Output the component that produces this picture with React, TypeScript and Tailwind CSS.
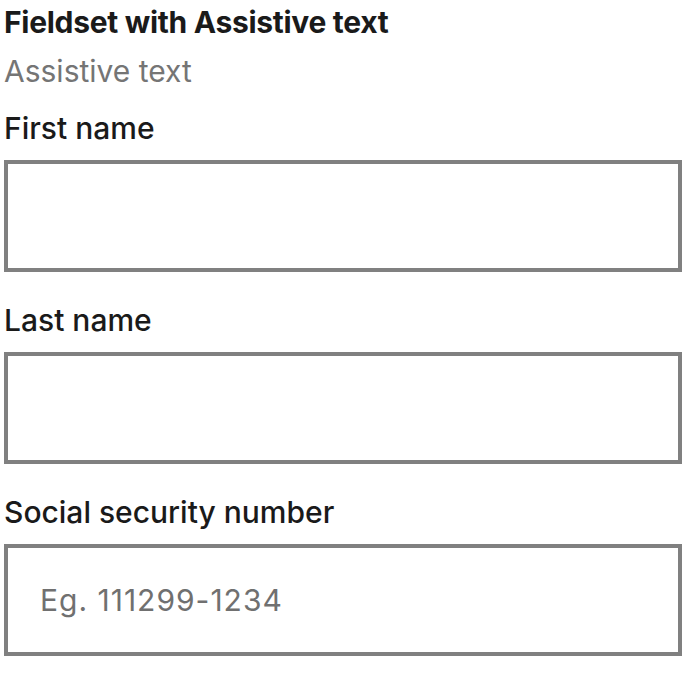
import { FC } from "react";

interface FieldProps {
  label: string;
  placeholder?: string;
}

const Field: FC<FieldProps> = ({ label, placeholder }) => {
  return (
    <div className="flex flex-col">
      <label className="text-[30px] leading-[36px] font-medium text-[#1a1a1a]">
        {label}
      </label>
      <input
        type="text"
        placeholder={placeholder}
        className="mt-[14px] h-[112px] w-full border-4 border-[#808080] bg-white px-8 text-[30px] tracking-[1px] text-[#1a1a1a] outline-none placeholder:text-[#707070]"
      />
    </div>
  );
};

const App: FC = () => {
  return (
    <div
      className="min-h-screen bg-white px-1 pt-1 text-[#1a1a1a]"
      style={{ fontFamily: "Inter, Roboto, 'Liberation Sans', sans-serif" }}
    >
      <fieldset className="flex flex-col">
        <legend className="text-[30px] leading-[36px] font-bold tracking-[-0.3px]">
          Fieldset with Assistive text
        </legend>
        <p className="mt-[13px] text-[30px] leading-[36px] text-[#757575]">
          Assistive text
        </p>
        <div className="mt-[21px] flex flex-col gap-[30px]">
          <Field label="First name" />
          <Field label="Last name" />
          <Field label="Social security number" placeholder="Eg. 111299-1234" />
        </div>
      </fieldset>
    </div>
  );
};

export default App;
